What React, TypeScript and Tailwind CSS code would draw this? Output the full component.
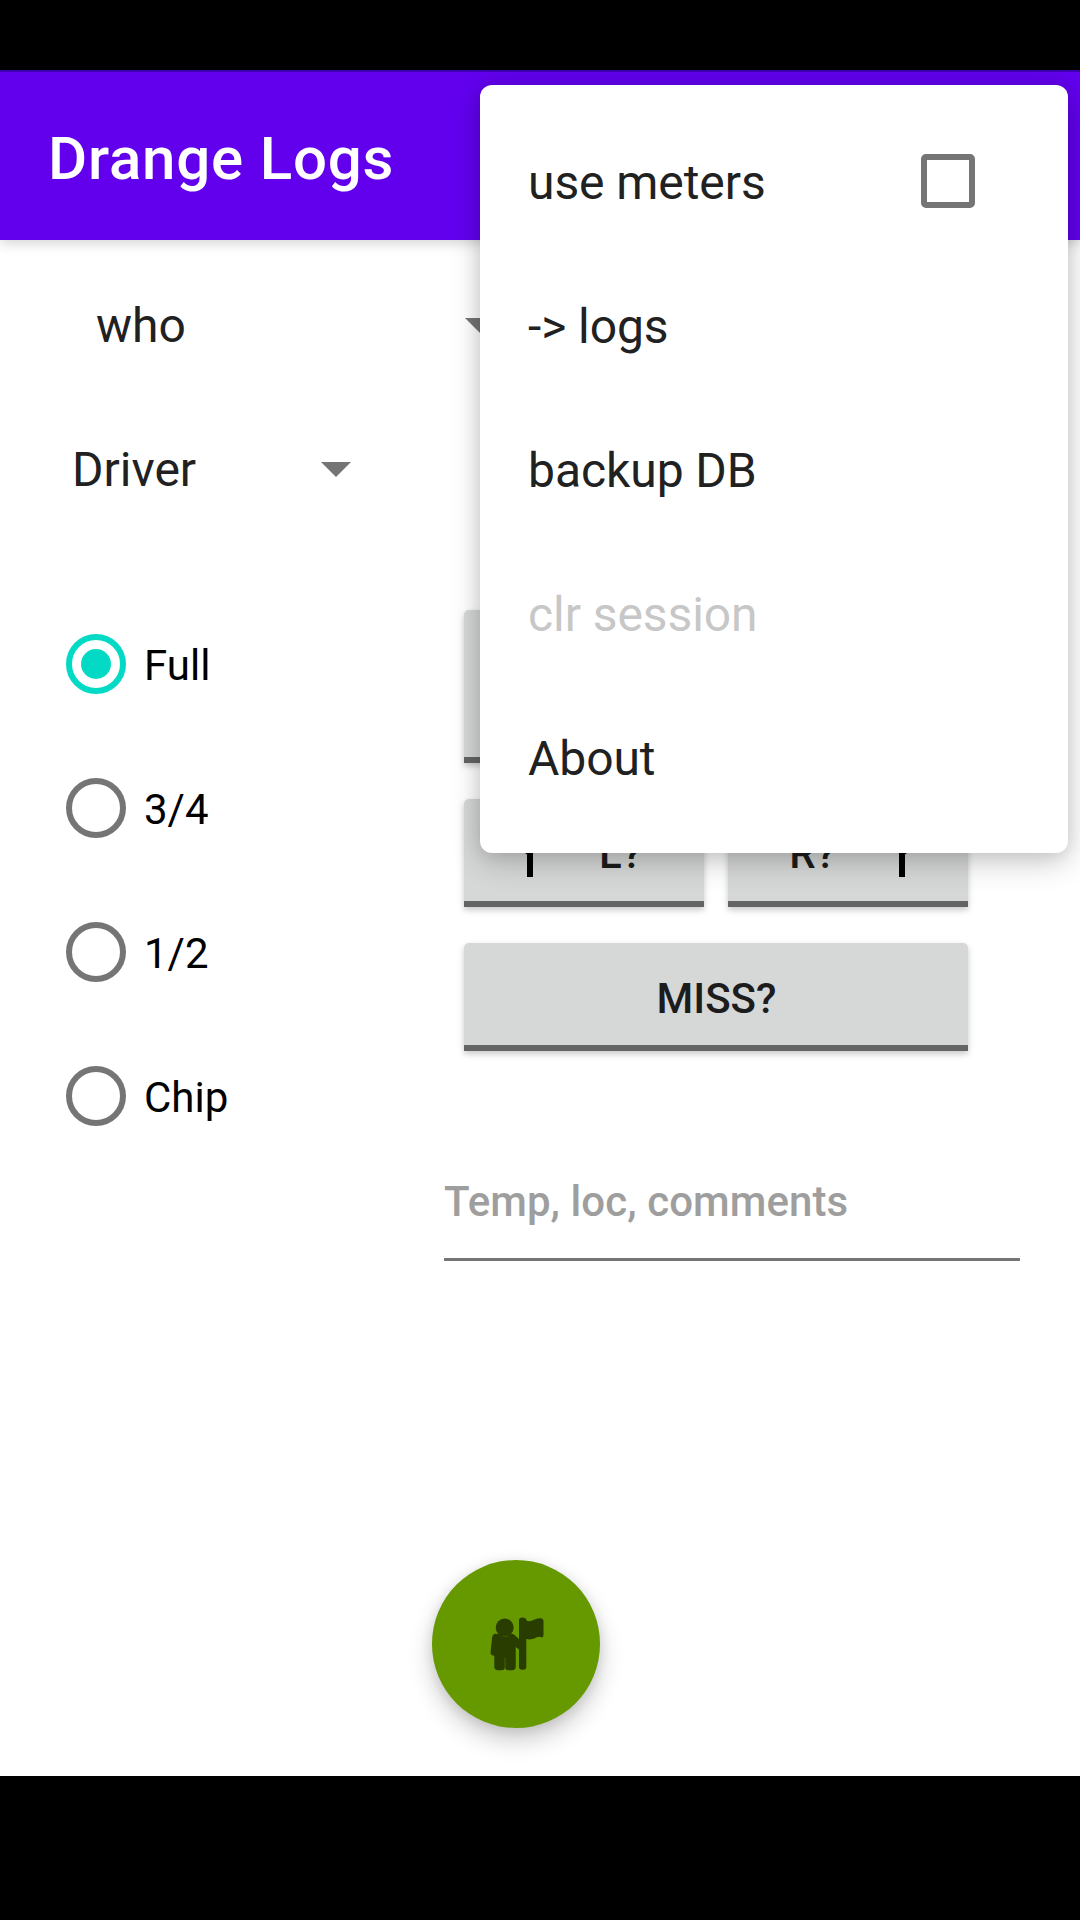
import React from "react";

const swings = ["Full", "3/4", "1/2", "Chip"];

const menuItems = [
  { label: "use meters", checkbox: true },
  { label: "-> logs" },
  { label: "backup DB" },
  { label: "clr session", disabled: true },
  { label: "About" },
];

function Caret() {
  return (
    <svg width="30" height="15" viewBox="0 0 30 15" className="shrink-0 fill-[#757575]">
      <path d="M0 0h30L15 15z" />
    </svg>
  );
}

function Spinner({ label, className }: { label: string; className: string }) {
  return (
    <button className={`flex h-36 items-center justify-between text-left text-[48px] leading-none text-[#212121] ${className}`}>
      <span className="pt-0.5">{label}</span>
      <Caret />
    </button>
  );
}

function Radio({ label, checked }: { label: string; checked: boolean }) {
  return (
    <label className="flex h-36 items-center gap-[18px] text-[42px] leading-none text-black">
      <span
        className={`flex size-[60px] items-center justify-center rounded-full border-6 ${
          checked ? "border-[#03dac5]" : "border-[#757575]"
        }`}
      >
        {checked && <span className="size-[30px] rounded-full bg-[#03dac5]" />}
      </span>
      <span className="pt-1">{label}</span>
    </label>
  );
}

function TurnArrow({ className = "" }: { className?: string }) {
  return (
    <svg width="36" height="46" viewBox="0 0 36 46" className={`shrink-0 ${className}`}>
      <path d="M15 46V23.500L14 22.800 2 12 14 1V9H21V46z" />
    </svg>
  );
}

function Button({ className, children }: { className: string; children?: React.ReactNode }) {
  return (
    <button
      className={`flex items-center rounded-t-[5px] border-b-6 border-[#636463] bg-[#d6d7d7] text-[42px] leading-none font-medium text-[#1c1c1c] shadow-[0_3px_6px_rgba(0,0,0,0.22)] ${className}`}
    >
      {children}
    </button>
  );
}

function FlagBearer() {
  return (
    <svg width="54" height="54" viewBox="0 0 54 54" className="ml-px fill-[#293d00]">
      <circle cx="14.7" cy="10.6" r="9" />
      <path d="M5.5 16.8Q2.6 17 2.2 20L.5 35.500Q.5 38.500 4.300 38.800V49.800Q4.300 53.200 7.800 53.200H11.600Q14.500 53.200 15 51Q15.600 53.200 18.500 53.200H22.300Q25.700 53.200 25.700 49.800V30L29 32.500V49.500Q29 52.800 32 52.800H33.200Q36.300 52.800 36.300 49.500V22Q42 23.500 47.500 20Q50 19.300 51.500 20.500Q53.500 20.500 53.500 18V4Q53.500 1.500 51.500 1.500C46 .4 43 4.600 38.500 4.300Q36.300 4 36.300 2.500Q35.500.5 32.500.5Q29 .5 29 3.500V22L24.500 18Q23.300 16.700 21 16.800Q15 22.500 9.500 17z" />
      <path d="M15 41v11" className="stroke-[#4a6f00]" strokeWidth="0.8" />
    </svg>
  );
}

function OverflowMenu() {
  return (
    <div className="absolute top-[85px] left-[480px] h-[768px] w-[588px] rounded-xl bg-white py-6 shadow-[0_10px_30px_rgba(0,0,0,0.2),0_0_18px_rgba(0,0,0,0.1)]">
      {menuItems.map((item) => (
        <div
          key={item.label}
          className={`flex h-36 items-center justify-between pr-[93px] pl-12 text-[48px] leading-none tracking-[-0.07px] ${
            item.disabled ? "text-[#c7c7c7]" : "text-[#212121]"
          }`}
        >
          <span className="pt-1">{item.label}</span>
          {item.checkbox && <span className="size-[54px] rounded-[5px] border-6 border-[#757575]" />}
        </div>
      ))}
    </div>
  );
}

export default function App() {
  return (
    <div className="relative flex h-[1920px] w-[1080px] flex-col overflow-hidden bg-white font-['Roboto',sans-serif]">
      <div className="h-[70px] shrink-0 bg-black" />
      <header className="z-0 flex h-[170px] shrink-0 items-center border-t-2 border-[#3c00b0] bg-[#6200ee] pt-1.5 pl-12 shadow-[0_3px_12px_rgba(0,0,0,0.18)]">
        <h1 className="text-[60px] leading-none font-medium tracking-[0.8px] text-white">Drange Logs</h1>
      </header>

      <main className="h-[1536px] shrink-0 pt-[13px]">
        <Spinner label="who" className="ml-24 w-[399px]" />
        <Spinner label="Driver" className="ml-[72px] w-[279px]" />

        <div className="mt-[51px] flex">
          <div className="ml-[66px] w-[378px]">
            {swings.map((swing) => (
              <Radio key={swing} label={swing} checked={swing === "Full"} />
            ))}
          </div>

          <div className="w-[576px] pt-[18px]">
            <div className="ml-5 flex w-[504px] flex-col">
              <Button className="h-[153px]" />
              <div className="mt-9 flex gap-6">
                <Button className="h-[108px] w-60 pt-2 pl-12">
                  <TurnArrow />
                  <span className="ml-[51px]">L?</span>
                </Button>
                <Button className="h-[108px] w-60 justify-end pt-2 pr-12">
                  <span className="mr-12">R?</span>
                  <TurnArrow className="-scale-x-100" />
                </Button>
              </div>
              <Button className="mt-9 h-[108px] justify-center pt-2.5 pl-px">MISS?</Button>
            </div>
            <input
              placeholder="Temp, loc, comments"
              className="mt-[91px] block h-[119px] w-full border-b-3 border-[#757575] pt-0.5 text-[42px] font-medium tracking-[0.07px] outline-none placeholder:text-[#9e9e9e]"
            />
          </div>
        </div>

        <button className="mt-[299px] ml-[432px] flex size-[168px] items-center justify-center rounded-full bg-[#669900] shadow-[0_12px_24px_rgba(0,0,0,0.2),0_2px_12px_rgba(0,0,0,0.1)]">
          <FlagBearer />
        </button>
      </main>

      <div className="h-36 shrink-0 bg-black" />
      <OverflowMenu />
    </div>
  );
}
